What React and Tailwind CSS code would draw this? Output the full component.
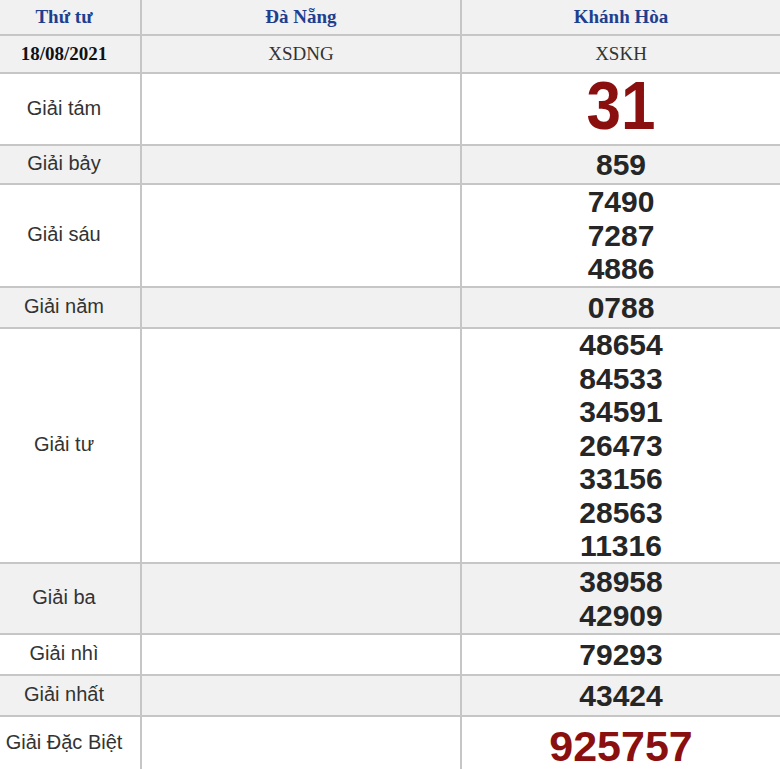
const prizes = [
  { label: 'Giải tám', h: 72, nums: ['31'], kind: 'big', alt: false },
  { label: 'Giải bảy', h: 39, nums: ['859'], alt: true },
  { label: 'Giải sáu', h: 103, nums: ['7490', '7287', '4886'], alt: false },
  { label: 'Giải năm', h: 41, nums: ['0788'], alt: true },
  {
    label: 'Giải tư',
    h: 235,
    nums: ['48654', '84533', '34591', '26473', '33156', '28563', '11316'],
    alt: false,
  },
  { label: 'Giải ba', h: 71, nums: ['38958', '42909'], alt: true },
  { label: 'Giải nhì', h: 41, nums: ['79293'], alt: false },
  { label: 'Giải nhất', h: 41, nums: ['43424'], alt: true },
  { label: 'Giải Đặc Biệt', h: 54, nums: ['925757'], kind: 'special', alt: false },
]

function Numbers({ nums, kind }) {
  if (kind === 'big') {
    return (
      <span className="mb-[8px] inline-block scale-y-[1.12] font-['Liberation_Sans',Arial,sans-serif] text-[62px] font-bold leading-[62px] text-[#8a0f0f]">
        {nums[0]}
      </span>
    )
  }
  if (kind === 'special') {
    return (
      <span className="pt-[6px] font-['Liberation_Sans',Arial,sans-serif] text-[43px] font-bold leading-[43px] text-[#8a0f0f]">
        {nums[0]}
      </span>
    )
  }
  return (
    <div className="flex flex-col items-center font-['Liberation_Sans',Arial,sans-serif] text-[30px] font-bold leading-[33.5px] text-[#262626]">
      {nums.map((n) => (
        <span key={n}>{n}</span>
      ))}
    </div>
  )
}

export default function App() {
  return (
    <div className="w-[780px] h-[769px] overflow-hidden bg-white">
      {/* header */}
      <div className="flex h-[34px] bg-[#f1f1f1] font-['Liberation_Serif','Times_New_Roman',serif] text-[19px] font-bold text-[#1e3f8f]">
        <div className="flex w-[140px] items-center justify-center pr-3">Thứ tư</div>
        <div className="flex w-[320px] items-center justify-center border-l-2 border-[#c6c6c6]">
          Đà Nẵng
        </div>
        <div className="flex flex-1 items-center justify-center border-l-2 border-[#c6c6c6]">
          Khánh Hòa
        </div>
      </div>

      <div className="flex h-[38px] border-t-2 border-[#c6c6c6] bg-[#f1f1f1] font-['Liberation_Serif','Times_New_Roman',serif] text-[19px] text-[#333]">
        <div className="flex w-[140px] items-center justify-center pr-3 font-bold text-[#111]">
          18/08/2021
        </div>
        <div className="flex w-[320px] items-center justify-center border-l-2 border-[#c6c6c6]">
          XSDNG
        </div>
        <div className="flex flex-1 items-center justify-center border-l-2 border-[#c6c6c6]">
          XSKH
        </div>
      </div>

      {prizes.map((p) => (
        <div
          key={p.label}
          style={{ height: p.h }}
          className={`flex border-t-2 border-[#c6c6c6] ${p.alt ? 'bg-[#f1f1f1]' : 'bg-white'}`}
        >
          <div className="flex w-[140px] items-center justify-center pr-3 pb-[3px] font-['Liberation_Sans',Arial,sans-serif] text-[20px] text-[#333]">
            {p.label}
          </div>
          <div className="w-[320px] border-l-2 border-[#c6c6c6]" />
          <div className="flex flex-1 items-center justify-center border-l-2 border-[#c6c6c6]">
            <Numbers nums={p.nums} kind={p.kind} />
          </div>
        </div>
      ))}
    </div>
  )
}
